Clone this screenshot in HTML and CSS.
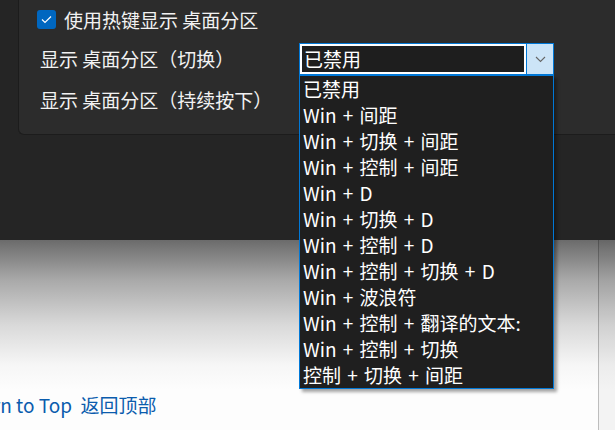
FILE: index.html
```html
<!DOCTYPE html>
<html lang="zh-CN">
<head>
<meta charset="UTF-8" />
<meta name="viewport" content="width=device-width, initial-scale=1.0"/>
<title>桌面分区 设置</title>
<link rel="stylesheet" href="styles.css">
</head>
<body>
<!-- Settings window -->
<div class="window">
  <div class="card">
    <div class="row row-check">
      <span class="checkbox">
        <svg width="11" height="9" viewBox="0 0 11 9"><polyline points="1,4.5 4,7.5 10,1.5" fill="none" stroke="#fff" stroke-width="1.2"/></svg>
      </span>
      <span class="label">使用热键显示 桌面分区</span>
    </div>
    <div class="row row-combo">
      <span class="label wide">显示 桌面分区（切换）</span>
      <div class="combo">
        <div class="combo-field">已禁用</div>
        <div class="combo-btn">
          <svg width="11" height="7" viewBox="0 0 11 7"><polyline points="1,1 5.5,5.5 10,1" fill="none" stroke="#666" stroke-width="1.1"/></svg>
        </div>
        <ul class="combo-list">
          <li>已禁用</li>
          <li>Win + 间距</li>
          <li>Win + 切换 + 间距</li>
          <li>Win + 控制 + 间距</li>
          <li>Win + D</li>
          <li>Win + 切换 + D</li>
          <li>Win + 控制 + D</li>
          <li>Win + 控制 + 切换 + D</li>
          <li>Win + 波浪符</li>
          <li>Win + 控制 + 翻译的文本:</li>
          <li>Win + 控制 + 切换</li>
          <li>控制 + 切换 + 间距</li>
        </ul>
      </div>
    </div>
    <div class="row row-plain">
      <span class="label wide">显示 桌面分区（持续按下）</span>
    </div>
  </div>
</div>

<!-- Page underneath -->
<div class="page">
  <div class="page-main">
    <a class="top-link" href="#">Return to Top&nbsp; 返回顶部</a>
  </div>
  <div class="scroll-track"></div>
</div>
</body>
</html>
```

FILE: styles.css
```css
body {
  margin: 0;
  background: #202020;
  font-family: "Noto Sans CJK SC", "Noto Sans", sans-serif;
  color: #f2f2f2;
  overflow: hidden;
}
.window {
  height: 240px;
  background: #252525;
}
.card {
  margin-left: 18px;
  height: 135px;
  box-sizing: border-box;
  padding: 9px 0 0 18px;
  background: #2c2c2c;
  border-left: 1px solid #1c1c1c;
  border-bottom: 1px solid #1c1c1c;
  border-bottom-left-radius: 6px;
}
.row {
  display: flex;
  align-items: center;
}
.label {
  font-size: 19px;
  line-height: 26px;
  white-space: nowrap;
}
.row-check {
  height: 21px;
}
.checkbox {
  width: 19px;
  height: 19px;
  border-radius: 3px;
  background: #0067c0;
  display: flex;
  align-items: center;
  justify-content: center;
  margin-right: 8px;
}
.row-combo {
  margin-top: 13px;
  height: 32px;
}
.row-plain {
  margin-top: 12px;
  height: 26px;
}
.wide {
  margin-left: 3px;
  width: 259px;
}
.combo {
  position: relative;
  display: flex;
  height: 32px;
}
.combo-field {
  width: 228px;
  box-sizing: border-box;
  border: 1px solid #0078d7;
  box-shadow: inset 0 0 0 2px #fff;
  background: #1e1e1e;
  padding-left: 4px;
  font-size: 19px;
  line-height: 30px;
  color: #fff;
}
.combo-btn {
  width: 27px;
  box-sizing: border-box;
  border: 1px solid #0078d7;
  border-left: none;
  background: #cce4f7;
  display: flex;
  align-items: center;
  justify-content: center;
}
.combo-list {
  position: absolute;
  top: 32px;
  left: 0;
  width: 255px;
  box-sizing: border-box;
  margin: 0;
  padding: 0;
  list-style: none;
  background: #1f1f1f;
  border: 1px solid #0078d7;
  box-shadow: 3px 3px 3px rgba(0, 0, 0, 0.35);
}
.combo-list li {
  height: 26px;
  line-height: 26px;
  padding-left: 3px;
  font-size: 19px;
  word-spacing: 2px;
  color: #fff;
  white-space: nowrap;
}
.page {
  display: flex;
  height: 190px;
  background: linear-gradient(to bottom, #6b6b6b 0, #a9a9a9 40px, #d9d9d9 85px, #f6f6f6 125px, #fdfdfd 150px);
}
.page-main {
  flex: 1;
  padding-top: 152px;
  overflow: hidden;
}
.scroll-track {
  width: 16px;
  border-left: 1px solid rgba(0, 0, 0, 0.22);
  background: rgba(0, 0, 0, 0.04);
}
.top-link {
  display: block;
  margin-left: -48px;
  font-size: 19px;
  line-height: 26px;
  color: #0b5cad;
  text-decoration: none;
  white-space: nowrap;
}
```
